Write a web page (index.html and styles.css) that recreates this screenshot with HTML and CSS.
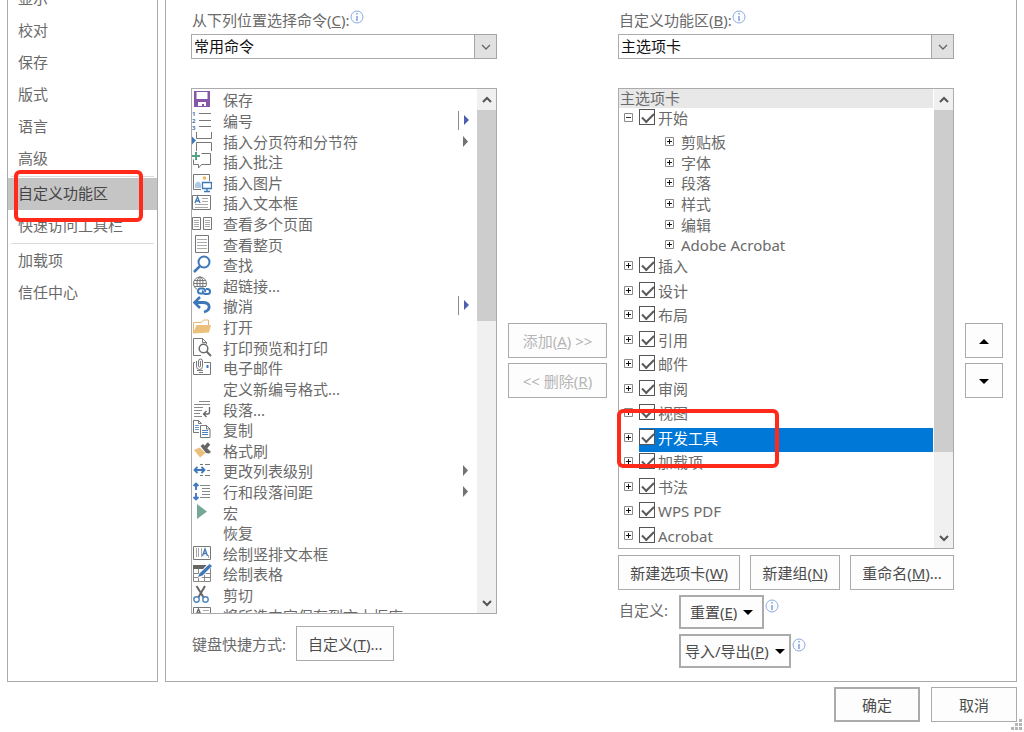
FILE: index.html
```html
<!DOCTYPE html>
<html lang="zh">

<head>
    <meta charset="utf-8">
    <title>Word 选项</title>
    <link rel="stylesheet" href="styles.css">
</head>

<body>
    <!-- 公用图标 -->
    <svg class="defs" width="0" height="0" aria-hidden="true">
        <symbol id="info" viewBox="0 0 14 14"><circle cx="7" cy="7" r="6" fill="#fafcff" stroke="#8fabdc" /><path d="M7 6v5M7 3v1.6" stroke="#6f92cf" stroke-width="1.3" /></symbol>
        <symbol id="plus" viewBox="0 0 9 9"><path d="M.5.5h8v8h-8z" fill="#fff" stroke="#8a8a8a" /><path d="M2 4.500h5M4.500 2v5" stroke="#111" /></symbol>
        <symbol id="minus" viewBox="0 0 9 9"><path d="M.5.5h8v8h-8z" fill="#fff" stroke="#8a8a8a" /><path d="M2 4.500h5" stroke="#333" /></symbol>
        <symbol id="more" viewBox="0 0 20 20"><path d="M6 4l5 5.500-5 5.500z" fill="#737373" /></symbol>
        <symbol id="split" viewBox="0 0 20 20"><path d="M1.500 0v19" stroke="#8c8c8c" /><path d="M7 4l5 5-5 5z" fill="#4d5fae" /></symbol>
        <symbol id="up" viewBox="0 0 12 12"><path d="M2 8l4-4 4 4" fill="none" stroke="#555" stroke-width="2" /></symbol>
        <symbol id="down" viewBox="0 0 12 12"><path d="M2 4l4 4 4-4" fill="none" stroke="#555" stroke-width="2" /></symbol>
        <symbol id="chevron" viewBox="0 0 12 12"><path d="M2 4l4 4 4-4" fill="none" stroke="#666" stroke-width="1.300" /></symbol>
    </svg>

    <div class="panels">
        <nav class="sidebar">
            <ul>
                <li><a href="#">显示</a></li>
                <li><a href="#">校对</a></li>
                <li><a href="#">保存</a></li>
                <li><a href="#">版式</a></li>
                <li><a href="#">语言</a></li>
                <li><a href="#">高级</a></li>
                <li class="line"></li>
                <li class="current"><a href="#">自定义功能区</a><span class="mark mark_nav"></span></li>
                <li><a href="#">快速访问工具栏</a></li>
                <li class="line"></li>
                <li><a href="#">加载项</a></li>
                <li><a href="#">信任中心</a></li>
            </ul>
        </nav>

        <main class="content">
            <!-- 左侧：命令 -->
            <section class="column commands">
                <div class="caption"><label for="source">从下列位置选择命令(<u>C</u>):</label><svg class="info"><use href="#info" /></svg></div>
                <div class="select">
                    <select id="source"><option>常用命令</option></select>
                    <span class="select_arrow"><svg width="12" height="12"><use href="#chevron" /></svg></span>
                </div>
                <div class="listbox">
                    <ul class="command_list">
                        <li><svg class="icon" viewBox="0 0 20 20"><path d="M2 1h16v16H2z" fill="#8656a8" /><path d="M4.500 2h11v7h-11z" fill="#fff" /><path d="M6 12h8v4h-2v-2h-2v2H6z" fill="#fff" /></svg>保存</li>
                        <li><svg class="icon" viewBox="0 0 20 20"><g font-size="6" font-weight="bold" fill="#3f74b5"><text x="0" y="5">1</text><text x="0" y="12">2</text><text x="0" y="19">3</text></g><path d="M7 2.500h12M7 9.500h12M7 15.500h12" stroke="#777" /></svg>编号<svg class="arrow"><use href="#split" /></svg></li>
                        <li><svg class="icon" viewBox="0 0 20 20"><path d="M0 4.500l4 4-4 4z" fill="#3f78b8" /><path d="M4.500 0v6.500h15V0M4.500 19v-8.500h15V19" fill="none" stroke="#777" /></svg>插入分页符和分节符<svg class="arrow"><use href="#more" /></svg></li>
                        <li><svg class="icon" viewBox="0 0 20 20"><path d="M9.500 1.500h9v11h-9l-3 3.500v-3.500h-5v-5" fill="none" stroke="#777" /><path d="M4 0v8M0 4h8" stroke="#55a183" stroke-width="2" /></svg>插入批注</li>
                        <li><svg class="icon" viewBox="0 0 20 20"><path d="M9 16.500H1.500v-15h16V8" fill="none" stroke="#777" /><path d="M3 15v-4q3-5 6 0v4z" fill="#aecbe4" /><circle cx="12.500" cy="5" r="1.800" fill="#edb765" /><path d="M10.500 9.500h9v6h-9zM15 15v3M12 18.500h6" fill="#fff" stroke="#3f78b8" stroke-width="1.300" /></svg>插入图片</li>
                        <li><svg class="icon" viewBox="0 0 20 20"><path d="M.5 2.500h18v14H.5z" fill="#fff" stroke="#777" /><path d="M3 10l2.500-6L8 10M4 8h3" fill="none" stroke="#3f78b8" stroke-width="1.300" /><path d="M10 5.500h6M10 8.500h6M3 11.500h13M3 14.500h13" stroke="#aaa" /></svg>插入文本框</li>
                        <li><svg class="icon" viewBox="0 0 20 20"><path d="M.5 3.500h8v12h-8zM11.500 3.500h8v12h-8z" fill="#fff" stroke="#777" /><path d="M2 6.500h5M2 8.500h5M2 10.500h5M2 12.500h5M13 6.500h5M13 8.500h5M13 10.500h5M13 12.500h5" stroke="#aaa" /></svg>查看多个页面</li>
                        <li><svg class="icon" viewBox="0 0 20 20"><path d="M3.500.5h13v17h-13z" fill="#fff" stroke="#777" /><path d="M5 4.500h10M5 7.500h10M5 10.500h10M5 13.500h10" stroke="#aaa" /></svg>查看整页</li>
                        <li><svg class="icon" viewBox="0 0 20 20"><circle cx="12" cy="7" r="5.500" fill="none" stroke="#3f78b8" stroke-width="2" /><path d="M8 11l-6 6" stroke="#3f78b8" stroke-width="2.500" /></svg>查找</li>
                        <li><svg class="icon" viewBox="0 0 20 20"><g fill="none" stroke="#777"><circle cx="8" cy="7.500" r="6.500" /><ellipse cx="8" cy="7.500" rx="3" ry="6.500" /><path d="M8 1v13M2 4.500h12M1.500 7.500h13M2 10.500h12" /></g><path d="M5 11h15v8H5z" fill="#fff" /><g fill="none" stroke="#3f78b8" stroke-width="2"><path d="M11 17.500H8.500a2.500 2.500 0 010-5H11a2.500 2.500 0 012 3.500" /><path d="M14 13h1.500a2.500 2.500 0 010 5H13a2.500 2.500 0 01-2-3.500" /></g></svg>超链接...</li>
                        <li><svg class="icon" viewBox="0 0 20 20"><path d="M4 6.500h7c8 0 8 8 1 9.500" fill="none" stroke="#3f78b8" stroke-width="2.800" /><path d="M8 1L2.500 6.500 8 12" fill="none" stroke="#3f78b8" stroke-width="2.600" /></svg>撤消<svg class="arrow"><use href="#split" /></svg></li>
                        <li><svg class="icon" viewBox="0 0 20 20"><path d="M1.500 16V5.500h8l2-2.500h5v5" fill="#fff" stroke="#e4b871" /><path d="M1 16.500L4.500 8H19l-2 7.500z" fill="#ecc07a" /></svg>打开</li>
                        <li><svg class="icon" viewBox="0 0 20 20"><path d="M9 17.500H1.500v-17h9l4 4V6M10.500.5v4h4" fill="none" stroke="#777" /><circle cx="11.500" cy="10.500" r="4.300" fill="#fff" stroke="#6b6b6b" stroke-width="1.500" /><path d="M14.500 13.500l4.500 4.500" stroke="#6b6b6b" stroke-width="2" /></svg>打印预览和打印</li>
                        <li><svg class="icon" viewBox="0 0 20 20"><path d="M3 4.500H1.500v12h17v-12H12M5 12.500h6M7 14.500h4" fill="none" stroke="#777" /><path d="M14.500 7h2v3h-2z" fill="#3f78b8" /><path d="M4.500 3v5.500a3 3 0 006 0V3a2 2 0 00-4 0v5a1 1 0 002 0V3" fill="none" stroke="#777" /></svg>电子邮件</li>
                        <li><span class="icon"></span>定义新编号格式...</li>
                        <li><svg class="icon" viewBox="0 0 20 20"><path d="M7 1.500h11M2 4.500h16M2 7.500h9M2 10.500h8M2 13.500h6M2 16.500h8" stroke="#888" /><path d="M17.500 7v5q0 2-2 2H12M14.500 11l-3 3 3 3" fill="none" stroke="#666" stroke-width="1.300" /></svg>段落...</li>
                        <li><svg class="icon" viewBox="0 0 20 20"><path d="M7 12.500H1.500v-12h5l3 3M6.500.5v3h3" fill="#fff" stroke="#777" /><path d="M3 5.500h4M3 7.500h4M3 9.500h4" stroke="#6b9dce" /><path d="M8.500 5.500h6l3.500 3.500v8.500H8.500zM14.500 5.500V9H18" fill="#fff" stroke="#777" /><path d="M10 10.500h6M10 12.500h6M10 14.500h6" stroke="#4b86c0" /></svg>复制</li>
                        <li><svg class="icon" viewBox="0 0 20 20"><path d="M2 9l5.500-2.500 6 5.500L8 16.500z" fill="#ecc07a" /><path d="M8.500 5l2.500-2 8 8-2 1.500-3-.5z" fill="#666" /><path d="M13 7l4-4.500" stroke="#666" stroke-width="3.500" /></svg>格式刷</li>
                        <li><svg class="icon" viewBox="0 0 20 20"><path d="M8 3.500h3M13 3.500h5M15 9.500h3M8 14.500h3M13 14.500h5" stroke="#777" /><path d="M3 9h9M5.500 6l-3 3 3 3M9.500 6l3 3-3 3" fill="none" stroke="#3f78b8" stroke-width="1.800" /></svg>更改列表级别<svg class="arrow"><use href="#more" /></svg></li>
                        <li><svg class="icon" viewBox="0 0 20 20"><path d="M8 3.500h10M10 6.500h8M10 9.500h8M10 12.500h8M8 15.500h10" stroke="#888" /><path d="M4 1v7M1.500 4L4 1.500 6.500 4M4 11v7M1.500 15L4 17.500 6.500 15" fill="none" stroke="#4379c0" stroke-width="1.900" /></svg>行和段落间距<svg class="arrow"><use href="#more" /></svg></li>
                        <li><svg class="icon" viewBox="0 0 20 20"><path d="M5 1l10 7.500L5 16z" fill="#76a896" /></svg>宏</li>
                        <li><span class="icon"></span>恢复</li>
                        <li><svg class="icon" viewBox="0 0 20 20"><path d="M1.500 2.500h17v13h-17z" fill="#fff" stroke="#777" /><path d="M4.500 4v9M6.500 4v9M9.500 4v9M16.500 11v3" stroke="#aaa" /><path d="M10.500 12L13 5l2.500 7M11.500 9.500h3" fill="none" stroke="#3f78b8" stroke-width="1.300" /></svg>绘制竖排文本框</li>
                        <li><svg class="icon" viewBox="0 0 20 20"><path d="M1.500 1.500h17v16h-17zM1.500 9.500h17M1.500 13.500h17M6.500 5v12M12.500 5v12" fill="#fff" stroke="#888" /><path d="M1 1h17v4H1z" fill="#666" /><path d="M19 0L9 11l-3 2" fill="none" stroke="#fff" stroke-width="5" /><path d="M17.500 0L20 2l-9.500 9.500L6 13l1.500-3.500z" fill="#3f78b8" /></svg>绘制表格</li>
                        <li><svg class="icon" viewBox="0 0 20 20"><path d="M4.500 1l7.500 12M13 1L6 13" stroke="#666" stroke-width="2" /><g fill="#fff" stroke="#4b86c0" stroke-width="1.400"><circle cx="4.500" cy="14.500" r="2.700" /><circle cx="13.500" cy="14.500" r="2.700" /></g></svg>剪切</li>
                        <li><svg class="icon" viewBox="0 0 20 20"><path d="M1.500 1.500h17v14h-17z" fill="#fff" stroke="#777" /><path d="M4 9l2.500-6L9 9M5 7h3" fill="none" stroke="#666" stroke-width="1.300" /><path d="M11 4.500h6M11 7.500h6" stroke="#aaa" /></svg>将所选内容保存到文本框库</li>
                    </ul>
                    <div class="scrollbar">
                        <button type="button" aria-label="向上滚动"><svg width="12" height="12"><use href="#up" /></svg></button>
                        <div class="track"><div class="thumb thumb_commands"></div></div>
                        <button type="button" aria-label="向下滚动"><svg width="12" height="12"><use href="#down" /></svg></button>
                    </div>
                </div>
                <div class="shortcut">
                    <label for="keys">键盘快捷方式:</label>
                    <button class="btn" id="keys" type="button">自定义(<u>T</u>)...</button>
                </div>
            </section>

            <div class="between">
                <button class="btn" type="button" disabled>添加(<u>A</u>) &gt;&gt;</button>
                <button class="btn" type="button" disabled>&lt;&lt; 删除(<u>R</u>)</button>
            </div>

            <!-- 右侧：功能区 -->
            <section class="column">
                <div class="caption"><label for="ribbon">自定义功能区(<u>B</u>):</label><svg class="info"><use href="#info" /></svg></div>
                <div class="select">
                    <select id="ribbon"><option>主选项卡</option></select>
                    <span class="select_arrow"><svg width="12" height="12"><use href="#chevron" /></svg></span>
                </div>
                <div class="tree_box">
                    <div class="listbox">
                        <div class="tree">
                            <h2>主选项卡</h2>
                            <ul class="tabs">
                                <li>
                                    <div class="tab"><button class="toggle" type="button" aria-label="折叠"><svg><use href="#minus" /></svg></button><label><input type="checkbox" checked>开始</label></div>
                                    <ul class="groups">
                                        <li><button class="toggle" type="button" aria-label="展开"><svg><use href="#plus" /></svg></button>剪贴板</li>
                                        <li><button class="toggle" type="button" aria-label="展开"><svg><use href="#plus" /></svg></button>字体</li>
                                        <li><button class="toggle" type="button" aria-label="展开"><svg><use href="#plus" /></svg></button>段落</li>
                                        <li><button class="toggle" type="button" aria-label="展开"><svg><use href="#plus" /></svg></button>样式</li>
                                        <li><button class="toggle" type="button" aria-label="展开"><svg><use href="#plus" /></svg></button>编辑</li>
                                        <li><button class="toggle" type="button" aria-label="展开"><svg><use href="#plus" /></svg></button>Adobe Acrobat</li>
                                    </ul>
                                </li>
                                <li class="tab"><button class="toggle" type="button" aria-label="展开"><svg><use href="#plus" /></svg></button><label><input type="checkbox" checked>插入</label></li>
                                <li class="tab"><button class="toggle" type="button" aria-label="展开"><svg><use href="#plus" /></svg></button><label><input type="checkbox" checked>设计</label></li>
                                <li class="tab"><button class="toggle" type="button" aria-label="展开"><svg><use href="#plus" /></svg></button><label><input type="checkbox" checked>布局</label></li>
                                <li class="tab"><button class="toggle" type="button" aria-label="展开"><svg><use href="#plus" /></svg></button><label><input type="checkbox" checked>引用</label></li>
                                <li class="tab"><button class="toggle" type="button" aria-label="展开"><svg><use href="#plus" /></svg></button><label><input type="checkbox" checked>邮件</label></li>
                                <li class="tab"><button class="toggle" type="button" aria-label="展开"><svg><use href="#plus" /></svg></button><label><input type="checkbox" checked>审阅</label></li>
                                <li class="tab"><button class="toggle" type="button" aria-label="展开"><svg><use href="#plus" /></svg></button><label><input type="checkbox" checked>视图</label></li>
                                <li class="tab selected"><button class="toggle" type="button" aria-label="展开"><svg><use href="#plus" /></svg></button><label><input type="checkbox" checked>开发工具</label></li>
                                <li class="tab"><button class="toggle" type="button" aria-label="展开"><svg><use href="#plus" /></svg></button><label><input type="checkbox" checked>加载项</label></li>
                                <li class="tab"><button class="toggle" type="button" aria-label="展开"><svg><use href="#plus" /></svg></button><label><input type="checkbox" checked>书法</label></li>
                                <li class="tab"><button class="toggle" type="button" aria-label="展开"><svg><use href="#plus" /></svg></button><label><input type="checkbox" checked>WPS PDF</label></li>
                                <li class="tab"><button class="toggle" type="button" aria-label="展开"><svg><use href="#plus" /></svg></button><label><input type="checkbox" checked>Acrobat</label></li>
                            </ul>
                        </div>
                        <div class="scrollbar">
                            <button type="button" aria-label="向上滚动"><svg width="12" height="12"><use href="#up" /></svg></button>
                            <div class="track"><div class="thumb thumb_tree"></div></div>
                            <button type="button" aria-label="向下滚动"><svg width="12" height="12"><use href="#down" /></svg></button>
                        </div>
                    </div>
                    <span class="mark mark_tree"></span>
                </div>
                <div class="tab_actions">
                    <button class="btn" type="button">新建选项卡(<u>W</u>)</button>
                    <button class="btn" type="button">新建组(<u>N</u>)</button>
                    <button class="btn" type="button">重命名(<u>M</u>)...</button>
                </div>
                <div class="custom">
                    <label for="reset">自定义:</label>
                    <div><button class="btn thick" id="reset" type="button">重置(<u>E</u>)<i class="caret"></i></button><svg class="info"><use href="#info" /></svg></div>
                    <div class="second"><button class="btn thick narrow" type="button">导入/导出(<u>P</u>)<i class="caret"></i></button><svg class="info"><use href="#info" /></svg></div>
                </div>
            </section>

            <div class="between">
                <button class="btn" type="button" aria-label="上移"><i class="caret caret_up"></i></button>
                <button class="btn" type="button" aria-label="下移"><i class="caret"></i></button>
            </div>
        </main>
    </div>

    <footer class="footer">
        <button class="btn thick" type="button">确定</button>
        <button class="btn" type="button">取消</button>
        <svg class="grip" viewBox="0 0 12 12"><path d="M8 0h3v3H8zM4 4h3v3H4zM8 4h3v3H8zM0 8h3v3H0zM4 8h3v3H4zM8 8h3v3H8z" fill="#b5b5b5" /></svg>
    </footer>
</body>

</html>
```
FILE: styles.css
```css
* {
    box-sizing: border-box;
}

body {
    margin: 0;
    height: 100vh;
    display: flex;
    flex-direction: column;
    background: #fff;
    color: #6a6a6a;
    font: 400 15px/20px "Noto Sans", "Noto Sans CJK SC", sans-serif;
    overflow: hidden;
}

ul {
    list-style: none;
    margin: 0;
    padding: 0;
}

button, select {
    font: inherit;
    color: inherit;
}

svg {
    display: block;
    flex: none;
}

.defs {
    position: absolute;
}

.panels {
    flex: 1;
    min-height: 0;
    display: flex;
    gap: 7px;
    padding: 0 7px;
}

/* 左侧导航 */
.sidebar {
    width: 151px;
    flex: none;
    border: 1px solid #ababab;
    border-top: 0;
}

.sidebar ul {
    margin-top: -17px;
}

.sidebar a {
    display: block;
    padding: 5px 10px 7px;
    color: inherit;
    text-decoration: none;
}

.sidebar .line {
    height: 1px;
    margin: 1px 3px;
    background: #dcdcdc;
}

.sidebar .current {
    position: relative;
    background: #c5c5c5;
    color: #444;
}

/* 红色标注框 */
.mark {
    position: absolute;
    border: 4px solid #ff2a1a;
    border-radius: 6px;
    pointer-events: none;
    z-index: 1;
}

.mark_nav {
    left: 6px;
    right: 14px;
    top: -8px;
    height: 52px;
}

.mark_tree {
    left: -1px;
    top: 321px;
    width: 162px;
    height: 59px;
}

.content {
    flex: 1;
    display: grid;
    grid-template-columns: minmax(0, 306fr) 99px minmax(0, 336fr) 38px;
    grid-template-rows: minmax(0, 1fr);
    gap: 11px;
    padding: 10px 13px 13px 25px;
    border: 1px solid #ababab;
    border-top: 0;
}

.column {
    display: flex;
    flex-direction: column;
}

.commands {
    margin-bottom: 7px;
}

.caption {
    display: flex;
    padding-left: 1px;
}

.info {
    width: 14px;
    height: 14px;
}

.select {
    position: relative;
    margin: 4px 0 29px;
}

.select select {
    display: block;
    width: 100%;
    height: 25px;
    padding: 0 24px 1px 2px;
    border: 1px solid #ababab;
    border-radius: 0;
    background: #fff;
    color: #111;
    appearance: none;
}

.select_arrow {
    position: absolute;
    right: 0;
    top: 0;
    width: 23px;
    height: 25px;
    display: grid;
    place-items: center;
    background: #e1e1e1;
    border: 1px solid #a5a5a5;
    pointer-events: none;
}

.listbox {
    flex: 1;
    min-height: 0;
    display: flex;
    border: 1px solid #ababab;
    overflow: hidden;
}

/* 命令列表 */
.command_list {
    flex: 1;
    height: 537px;
    padding-top: 1px;
    display: grid;
    grid-auto-rows: 1fr;
}

.command_list li {
    display: flex;
    align-items: center;
    white-space: nowrap;
}

.icon {
    width: 20px;
    height: 20px;
    margin-right: 11px;
}

.arrow {
    width: 20px;
    height: 20px;
    margin-left: auto;
}

.scrollbar {
    width: 19px;
    flex: none;
    display: flex;
    flex-direction: column;
    background: #f0f0f0;
}

.scrollbar button {
    height: 21px;
    padding: 0;
    border: 0;
    background: none;
    display: grid;
    place-items: center;
}

.track {
    flex: 1;
}

.thumb {
    background: #cdcdcd;
}

.thumb_commands {
    height: 211px;
}

.thumb_tree {
    height: 342px;
}

.shortcut {
    display: flex;
    align-items: center;
    gap: 10px;
    margin-top: 12px;
    padding-left: 1px;
}

/* 按钮 */
.btn {
    height: 35px;
    padding: 0 11px;
    border: 1px solid #ababab;
    background: #fdfdfd;
    color: #4c4c4c;
    white-space: nowrap;
}

.btn:disabled {
    color: #b5b5b5;
}

.thick {
    border: 2px solid #ababab;
}

.caret {
    display: inline-block;
    margin-left: 6px;
    border: 5px solid transparent;
    border-top-color: #000;
    border-bottom: 0;
    vertical-align: 3px;
}

.caret_up {
    border-top: 0;
    border-bottom: 5px solid #000;
}

.between {
    display: flex;
    flex-direction: column;
    gap: 5px;
    padding-top: 313px;
}

.between .btn {
    padding: 0;
}

.between .caret {
    margin: 0;
}

/* 选项卡树 */
.tree_box {
    flex: 1;
    min-height: 0;
    display: flex;
    position: relative;
}

.tree {
    flex: 1;
}

.tree h2 {
    height: 19px;
    margin: 0 1px 0 0;
    padding-left: 1px;
    background: #e8e8e8;
    font-size: 15px;
    font-weight: 400;
    line-height: 19px;
}

.tabs {
    height: 442px;
    display: grid;
    grid-template-rows: auto repeat(12, 1fr);
}

.tab {
    display: flex;
    align-items: flex-start;
    gap: 6px;
    height: 100%;
    padding-left: 5px;
}

.tab label {
    flex: 1;
    display: flex;
    gap: 3px;
    align-self: stretch;
    margin-right: 1px;
}

.tab input {
    appearance: none;
    width: 16px;
    height: 16px;
    margin: 1px 0;
    border: 1px solid #555;
    background: #fff;
}

.tab input:checked::before {
    content: "";
    display: block;
    width: 10px;
    height: 5px;
    margin: 3px 2px;
    border: solid #5a5a5a;
    border-width: 0 0 2px 2px;
    transform: rotate(-45deg);
}

.tab.selected label {
    background: #0078d7;
    color: #fff;
}

div.tab {
    height: 24px;
}

.toggle {
    width: 9px;
    height: 9px;
    padding: 0;
    border: 0;
    background: none;
    margin-top: 5px;
}

.toggle svg {
    width: 9px;
    height: 9px;
}

.groups {
    height: 124px;
    display: grid;
    grid-auto-rows: 1fr;
    padding-left: 46px;
}

.groups li {
    display: flex;
    gap: 7px;
}

.tab_actions {
    display: flex;
    gap: 10px;
    margin: 6px 0 5px;
}

.tab_actions .btn {
    flex: 1 0 auto;
    padding: 0;
}

.custom {
    display: grid;
    grid-template-columns: 60px 1fr;
    row-gap: 5px;
    padding-left: 1px;
}

.custom label {
    padding-top: 5px;
}

.custom div {
    display: flex;
    gap: 1px;
}

.custom .btn {
    height: 34px;
    padding: 0 9px;
}

.custom .narrow {
    padding: 0 4px;
}

.custom .info {
    margin-top: 4px;
}

.second {
    grid-column: 2;
}

/* 底部 */
.footer {
    position: relative;
    display: flex;
    justify-content: flex-end;
    gap: 11px;
    padding: 5px 7px 10px;
}

.footer .btn {
    width: 86px;
}

.grip {
    position: absolute;
    right: 1px;
    bottom: 1px;
    width: 12px;
    height: 12px;
}
```
